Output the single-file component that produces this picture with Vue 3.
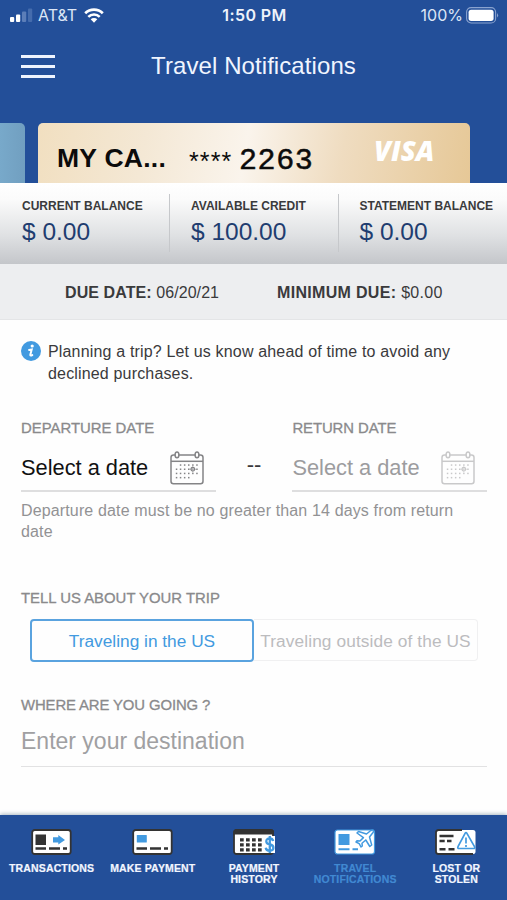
<script setup>
import { ref } from 'vue'

const balances = [
  { label: 'CURRENT BALANCE', amount: '$ 0.00' },
  { label: 'AVAILABLE CREDIT', amount: '$ 100.00' },
  { label: 'STATEMENT BALANCE', amount: '$ 0.00' },
]
const dates = [
  { id: 'departure', label: 'DEPARTURE DATE' },
  { id: 'return', label: 'RETURN DATE' },
]
// Day columns per calendar row: top to bottom
const dots = [
  { y: 14, xs: [10.5, 14.6, 18.7, 22.8, 26.9] },
  { y: 18.2, xs: [6.5, 10.5, 14.6, 18.7, 26.9] },
  { y: 22.4, xs: [6.5, 10.5, 14.6, 18.7, 22.8, 26.9] },
  { y: 26.6, xs: [6.5, 10.5, 14.6, 18.7] },
].flatMap(({ y, xs }) => xs.map((x) => [x, y]))
const tabs = [
  { id: 'transactions', lines: ['TRANSACTIONS'] },
  { id: 'pay', lines: ['MAKE PAYMENT'] },
  { id: 'history', lines: ['PAYMENT', 'HISTORY'] },
  { id: 'travel', lines: ['TRAVEL', 'NOTIFICATIONS'] },
  { id: 'lost', lines: ['LOST OR', 'STOLEN'] },
]
const active = ref('travel')
</script>

<template>
  <div class="screen">
    <header class="top">
      <div class="status">
        <div class="carrier">
          <svg class="signal" width="23" height="14" viewBox="0 0 23 14">
            <rect x="0" y="9" width="4.2" height="5" rx="1" fill="#fff" />
            <rect x="6" y="6.5" width="4.2" height="7.5" rx="1" fill="#fff" />
            <rect x="12" y="3.5" width="4.2" height="10.5" rx="1" fill="#5c7eb8" />
            <rect x="18" y="0.5" width="4.2" height="13.5" rx="1" fill="#456cad" />
          </svg>
          <span class="carrier-name">AT&amp;T</span>
          <svg class="wifi" width="20" height="15" viewBox="0 0 20 15">
            <path d="M1.2 5.2 A12.6 12.6 0 0 1 18.8 5.2" fill="none" stroke="#fff" stroke-width="2.7" />
            <path d="M4.3 8.8 A8 8 0 0 1 15.7 8.8" fill="none" stroke="#fff" stroke-width="2.5" />
            <path d="M6.7 11.3 A4.7 4.7 0 0 1 13.3 11.3 L10 14.8 Z" fill="#fff" />
          </svg>
        </div>
        <span class="clock">1:50 PM</span>
        <div class="power">
          <span class="percent">100%</span>
          <svg width="33" height="17" viewBox="0 0 33 17">
            <rect x=".6" y=".6" width="29" height="15.4" rx="4.5" fill="none" stroke="#8aa3cf" stroke-width="1.1" />
            <rect x="2.6" y="2.7" width="25" height="11.2" rx="2.6" fill="#fff" />
            <path d="M31 6 Q33.2 8.3 31 10.6Z" fill="#8aa3cf" />
          </svg>
        </div>
      </div>
      <div class="titlebar">
        <button class="menu" aria-label="Menu"><i /><i /><i /></button>
        <h1>Travel Notifications</h1>
      </div>
      <div class="cards">
        <div class="card previous" />
        <div class="card current">
          <span class="card-name">MY CA...</span>
          <span class="stars">****</span>
          <span class="digits">2263</span>
          <span class="visa">VISA</span>
        </div>
      </div>
    </header>

    <section class="balances">
      <div v-for="b in balances" :key="b.label" class="balance">
        <span class="balance-label">{{ b.label }}</span>
        <span class="amount">{{ b.amount }}</span>
      </div>
    </section>
    <section class="due">
      <span class="due-date"><b>DUE DATE:</b> 06/20/21</span>
      <span class="due-min"><b>MINIMUM DUE:</b> $0.00</span>
    </section>

    <main>
      <div class="info">
        <svg width="20" height="20" viewBox="0 0 20 20">
          <circle cx="10" cy="10" r="10" fill="#429ae0" />
          <circle cx="11.2" cy="5" r="1.6" fill="#fff" />
          <path d="M8 8.9 L10.7 8.4 L9.3 13.8 Q9.2 15.1 11.3 14.1" fill="none" stroke="#fff" stroke-width="2" stroke-linecap="round" />
        </svg>
        <p>Planning a trip? Let us know ahead of time to avoid any<br>declined purchases.</p>
      </div>

      <div class="dates">
        <template v-for="(d, n) in dates" :key="d.id">
          <span v-if="n" class="dash">--</span>
          <div class="date" :class="d.id">
            <label class="label">{{ d.label }}</label>
            <div class="picker">
              <span>Select a date</span>
              <svg width="34" height="34" viewBox="0 0 34 34" fill="none" stroke="currentColor" stroke-width="1.5">
                <rect x="1" y="4" width="32" height="28.8" rx="2.5" />
                <path d="M1 10.3H33" />
                <ellipse cx="7" cy="3.9" rx="1.9" ry="2.8" fill="#fff" />
                <ellipse cx="27" cy="3.9" rx="1.9" ry="2.8" fill="#fff" />
                <rect v-for="([x, y], i) in dots" :key="i" :x="x - .7" :y="y - .7" width="1.5" height="1.5" fill="currentColor" stroke="none" />
                <circle cx="22.8" cy="18.2" r="1.8" stroke-width="1.2" />
                <path d="M22.8 15.2V21.4M19.6 18.2H26" stroke-width=".6" />
              </svg>
            </div>
          </div>
        </template>
      </div>
      <p class="hint">Departure date must be no greater than 14 days from return<br>date</p>

      <div class="label trip-label">TELL US ABOUT YOUR TRIP</div>
      <div class="choice">
        <button class="chosen">Traveling in the US</button>
        <button class="other">Traveling outside of the US</button>
      </div>

      <div class="label where-label">WHERE ARE YOU GOING ?</div>
      <div class="destination">Enter your destination</div>
    </main>

    <nav>
      <a v-for="t in tabs" :key="t.id" class="tab" :class="{ active: t.id === active }">
        <svg width="42" height="26" viewBox="0 0 42 26">
          <template v-if="t.id === 'transactions' || t.id === 'pay'">
            <rect x="1.2" y="1" width="38.5" height="24" rx="2.5" fill="#fff" stroke="#333" stroke-width="1.8" />
            <template v-if="t.id === 'transactions'">
              <rect x="4.5" y="5.5" width="10.5" height="10.5" fill="#333" />
              <path d="M22 8.3H27.3V6L34 11L27.3 15.6V13.4H22Z" fill="#429ae0" />
            </template>
            <rect v-else x="4.8" y="6" width="10" height="7.5" rx=".6" fill="#429ae0" />
            <path d="M4.5 19.5H15M18 19.5H29M32 19.5H36" stroke="#333" stroke-width="2.5" />
          </template>
          <template v-else-if="t.id === 'history'">
            <rect x="1" y="1" width="39" height="24" rx="2.5" fill="#fff" stroke="#333" stroke-width="1.8" />
            <path d="M.5 5.5V3Q.5.3 3 .3H38Q41 .3 41 3V5.5Z" fill="#333" />
            <path d="M7 10.8H29M7 15.8H29M7 20.8H29" stroke="#333" stroke-width="3.2" stroke-dasharray="3.7 2.3" />
            <path d="M32 7H42V24H32Z" fill="#fff" />
            <path d="M40.2 12Q39.5 9.5 36.8 9.5Q33.2 9.5 33.3 12.5Q33.4 15 36.8 15.5Q40.5 16 40.4 19Q40.3 21.7 36.8 21.7Q33.2 21.7 32.7 18.7M36.8 7V24" fill="none" stroke="#429ae0" stroke-width="2.3" />
          </template>
          <template v-else-if="t.id === 'travel'">
            <rect x="1" y="1" width="39.5" height="24" rx="2.5" fill="#fff" stroke="#429ae0" stroke-width="1.2" />
            <rect x="4.5" y="5" width="11" height="11" fill="#429ae0" />
            <path d="M4.5 20.3H15.5M18.5 20.3H24" stroke="#429ae0" stroke-width="2" />
            <path d="M24.5 2.5L32.5 5L36.8 1.5Q40.3-.2 39.2 3.2L35.5 8L37.7 16L35.8 17.5L31.8 11L28 14.3L28.3 17L27 18L25.2 14.7L22 13L23 11.7L26 12L29.4 8.6L23 4Z" fill="#fff" stroke="#429ae0" stroke-width="1.5" stroke-linejoin="round" />
          </template>
          <template v-else>
            <rect x="1" y="1" width="39.5" height="24" rx="2.5" fill="#fff" />
            <path d="M27 1H3.5Q1 1 1 3.5V22.5Q1 25 3.5 25H38" fill="none" stroke="#333" stroke-width="1.8" />
            <path d="M4.5 7H18.5M4.5 12H9.7M12 12H16.5M4.5 20.3H10.5M13.5 20.3H19.5" stroke="#333" stroke-width="2.5" />
            <path d="M31.8 4.2Q31 2.8 30.2 4.2L23 17.7Q22.3 19.5 24 19.5H38.5Q40.4 19.5 39.5 17.7Z" fill="#fff" stroke="#429ae0" stroke-width="1.7" />
            <path d="M31 8.5V14.5M31 16V18" stroke="#429ae0" stroke-width="1.7" />
          </template>
        </svg>
        <span v-for="l in t.lines" :key="l">{{ l }}</span>
      </a>
    </nav>
  </div>
</template>

<style>
body {
  margin: 0;
}
</style>

<style scoped>
* {
  box-sizing: border-box;
}
.screen {
  display: flex;
  flex-direction: column;
  width: 507px;
  height: 900px;
  overflow: hidden;
  background: #fefefe;
  color: #3a3a3c;
  font-family: "Liberation Sans", Arial, sans-serif;
  white-space: nowrap;
}
p, h1 {
  margin: 0;
}
button {
  padding: 0;
  background: none;
  border: 0;
  font: inherit;
}
.top {
  height: 183px;
  background: #234f99;
  color: #fff;
}
.status {
  display: grid;
  grid-template-columns: 1fr auto 1fr;
  align-items: center;
  height: 30px;
  padding: 0 8px 0 10px;
  font-family: Inter, sans-serif;
  font-size: 16px;
}
.carrier, .power {
  display: flex;
  align-items: center;
}
.power {
  justify-content: flex-end;
  gap: 3px;
}
.carrier-name {
  margin: 0 7px 0 5px;
  color: #dce6f6;
}
.clock {
  font-weight: 600;
  letter-spacing: .4px;
  color: #eef3fb;
}
.percent {
  color: #dce6f6;
}
.titlebar {
  display: grid;
  grid-template-columns: 34px 1fr 34px;
  align-items: center;
  height: 72px;
  padding: 0 21px;
}
.menu {
  display: flex;
  flex-direction: column;
  gap: 7px;
}
.menu i {
  height: 3px;
  width: 34px;
  background: #eef4ff;
}
h1 {
  font-size: 24px;
  font-weight: 400;
  text-align: center;
  letter-spacing: .08px;
  color: #f0f5ff;
}
.cards {
  display: flex;
  gap: 13px;
  padding-top: 21px;
}
.card {
  height: 60px;
}
.previous {
  width: 25px;
  border-radius: 0 5px 0 0;
  background: linear-gradient(90deg, #78a9ca, #719fc0);
}
.current {
  display: flex;
  width: 432px;
  padding-left: 19px;
  border-radius: 5px 5px 0 0;
  background: linear-gradient(100deg, #f1dfc0 0%, #f4e8d5 25%, #faf4ec 48%, #efdcc0 70%, #e6c897 100%);
  color: #0b0b0b;
}
.card-name {
  width: 132px;
  font-size: 26.5px;
  font-weight: 700;
  line-height: 71px;
  letter-spacing: .25px;
}
.stars {
  width: 50px;
  font-size: 25px;
  line-height: 77px;
  letter-spacing: 1.1px;
}
.digits {
  width: 135px;
  font-family: "Liberation Mono", monospace;
  font-size: 30px;
  line-height: 76px;
  letter-spacing: .6px;
  -webkit-text-stroke: .5px #0b0b0b;
}
.visa {
  font-family: "Open Sans", sans-serif;
  font-size: 27.5px;
  font-style: italic;
  font-weight: 800;
  line-height: 56px;
  color: #fff;
}
.balances {
  display: flex;
  height: 81px;
  padding: 11px 0 0;
  background: linear-gradient(#fff 0%, #fbfbfb 20%, #dfe1e3 65%, #c4c6ca 100%);
}
.balance {
  display: flex;
  flex-direction: column;
  width: 168.5px;
  height: 58px;
  padding: 3px 0 0 21px;
  border-left: 1px solid #c6c8cb;
}
.balance:first-child {
  width: 169px;
  padding-left: 22px;
  border-left: 0;
}
.balance-label {
  font-size: 12px;
  font-weight: 700;
  line-height: 18px;
}
.amount {
  color: #1f3d70;
  font-size: 24.5px;
  line-height: 34px;
}
.due {
  display: flex;
  height: 56px;
  padding-left: 65px;
  background: #edeef0;
  border-bottom: 1px solid #e4e5e7;
  font-size: 16px;
  line-height: 57px;
}
.due-date {
  width: 212px;
  letter-spacing: .08px;
}
.due-min {
  letter-spacing: .32px;
}
main {
  flex: 1;
  padding: 21px 20px 0 21px;
}
.info {
  display: flex;
  gap: 7px;
  font-size: 16px;
  line-height: 21.5px;
  letter-spacing: .165px;
}
.label {
  display: block;
  height: 20px;
  color: #8a8a8c;
  font-size: 14.9px;
  line-height: 21px;
  -webkit-text-stroke: .3px #8a8a8c;
}
.dates {
  display: flex;
  margin-top: 34px;
}
.date {
  width: 195px;
}
.picker {
  display: flex;
  align-items: center;
  justify-content: space-between;
  height: 54px;
  padding: 7px 12px 0 0;
  border-bottom: 2px solid #dededf;
  color: #848486;
  font-size: 21.8px;
}
.picker span {
  padding-top: 1px;
}
.departure .picker span {
  color: #111;
}
.return .picker {
  color: #c9c9ca;
}
.return .picker span {
  color: #9c9c9e;
}
.return .label {
  letter-spacing: -.08px;
}
.dash {
  width: 77px;
  padding-top: 35px;
  font-size: 22px;
  line-height: 24px;
  text-align: center;
}
.hint {
  margin-top: 7.5px;
  color: #929294;
  font-size: 16px;
  line-height: 21.5px;
  letter-spacing: .14px;
}
.trip-label {
  margin-top: 45px;
}
.choice {
  display: flex;
  align-items: center;
  margin-top: 11px;
  padding-left: 9px;
  font-size: 17.3px;
}
.chosen {
  width: 224px;
  height: 43px;
  padding-top: 2px;
  border: 2px solid #5aa3df;
  border-radius: 4px;
  color: #429ae0;
}
.other {
  width: 224px;
  height: 42px;
  padding-top: 2px;
  border: 1px solid #f0f0f1;
  border-left: 0;
  border-radius: 0 4px 4px 0;
  color: #bcbcbe;
  letter-spacing: .1px;
}
.where-label {
  margin-top: 33px;
  letter-spacing: -.12px;
}
.destination {
  height: 52px;
  border-bottom: 1px solid #e2e2e3;
  color: #a0a0a2;
  font-size: 23px;
  line-height: 52px;
}
nav {
  display: flex;
  height: 85px;
  padding: 14px 0 0 1px;
  background: #234f99;
  box-shadow: 0 -1px 4px #a9b8c2;
}
.tab {
  display: flex;
  flex-direction: column;
  align-items: center;
  width: 101.2px;
  color: #f2f6ff;
  font-size: 10.5px;
  font-weight: 700;
  line-height: 11px;
  letter-spacing: .15px;
  -webkit-text-stroke: .2px;
}
.tab svg {
  margin-bottom: 8px;
}
.active {
  color: #4189d2;
}
</style>
